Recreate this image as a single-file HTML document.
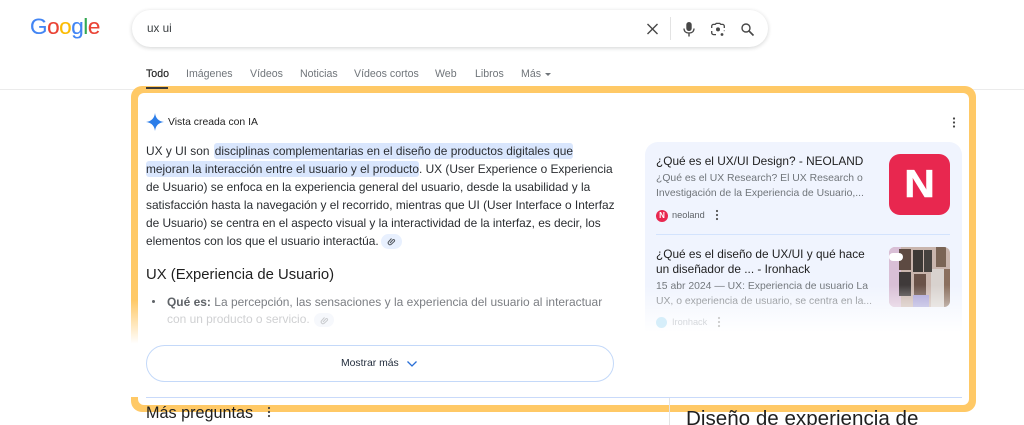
<!DOCTYPE html>
<html lang="es"><head><meta charset="utf-8"><title>ux ui - Buscar con Google</title>
<style>
html,body{margin:0;padding:0;background:#fff}
#p{position:relative;width:1024px;height:425px;overflow:hidden;background:#fff;font-family:"Liberation Sans",sans-serif;color:#1f1f1f;filter:blur(.3px)}
.a{position:absolute;white-space:nowrap}
.l{font-size:11.9px;line-height:18px;color:#2a2d31;left:146px}
.t{font-size:10.6px;color:#70757a;top:68px;line-height:13px}
.h{background:#d9e6fd;border-radius:3px;padding:1px 0}
.d{color:#70757a;font-size:10.4px;line-height:14.5px;left:656px}
.s{color:#1f1f1f;font-size:11.85px;line-height:15px;left:656px}
</style></head><body><div id="p">

<!-- Google logo -->
<div class="a" style="left:30px;top:10px;font-size:22.5px;line-height:34px;letter-spacing:-.45px;-webkit-text-stroke:.12px"><span style="color:#4285f4">G</span><span style="color:#ea4335">o</span><span style="color:#fbbc05">o</span><span style="color:#4285f4">g</span><span style="color:#34a853">l</span><span style="color:#ea4335">e</span></div>

<!-- Search box -->
<div class="a" style="left:132px;top:10px;width:636px;height:37px;border-radius:19px;background:#fff;box-shadow:0 1px 4px rgba(32,33,36,.2)"></div>
<div class="a" style="left:147px;top:22px;font-size:11.7px;line-height:14px;color:#3c4043">ux ui</div>
<svg class="a" style="left:645px;top:21px" width="15" height="16" viewBox="0 0 15 16"><path d="M2.500 3l10 10M12.500 3l-10 10" stroke="#474747" stroke-width="1.400" fill="none"/></svg>
<div class="a" style="left:670px;top:17px;width:1px;height:23px;background:#e3e3e3"></div>
<svg class="a" style="left:681px;top:21px" width="16" height="16" viewBox="0 0 16 16"><rect x="5.300" y="1" width="5.400" height="9" rx="2.700" fill="#474747"/><path d="M3 7.500c0 3 2 4.500 5 4.500s5-1.500 5-4.500" stroke="#474747" stroke-width="1.300" fill="none"/><path d="M8 12v3.500" stroke="#474747" stroke-width="1.400"/></svg>
<svg class="a" style="left:710px;top:22px" width="16" height="15" viewBox="0 0 16 15"><path d="M1.700 6V4.200a1.800 1.800 0 0 1 1.800-1.800h1.700l1-1h3.600l1 1h1.700a1.800 1.800 0 0 1 1.800 1.800V6M1.700 9v1.800a1.800 1.800 0 0 0 1.800 1.800H6M14.300 8.500v.6" stroke="#474747" stroke-width="1.300" fill="none"/><circle cx="8" cy="7.400" r="2" fill="#474747"/><circle cx="12" cy="12.500" r="1.400" fill="#474747"/></svg>
<svg class="a" style="left:740px;top:22px" width="15" height="15" viewBox="0 0 15 15"><circle cx="6" cy="6" r="4" stroke="#474747" stroke-width="1.400" fill="none"/><path d="M9 9l4.500 4.500" stroke="#474747" stroke-width="1.600"/></svg>

<!-- Tabs -->
<div class="a t" style="left:146px;color:#1f1f1f;-webkit-text-stroke:.15px #1f1f1f">Todo</div>
<div class="a t" style="left:186px">Imágenes</div>
<div class="a t" style="left:250px">Vídeos</div>
<div class="a t" style="left:300px">Noticias</div>
<div class="a t" style="left:354px">Vídeos cortos</div>
<div class="a t" style="left:435px">Web</div>
<div class="a t" style="left:475px">Libros</div>
<div class="a t" style="left:521px">Más</div>
<div class="a" style="left:545px;top:73px;width:0;height:0;border-left:3px solid transparent;border-right:3px solid transparent;border-top:3px solid #70757a"></div>
<div class="a" style="left:0;top:89px;width:1024px;height:1px;background:#ebebeb"></div>

<!-- Yellow frame -->
<div class="a" style="left:131px;top:86px;width:845px;height:326px;border-radius:11px;background:#ffc966"></div>
<div class="a" style="left:138px;top:93px;width:831px;height:312px;border-radius:6px;background:#fff"></div>
<div class="a" style="left:131px;top:300px;width:7px;height:97px;background:linear-gradient(rgba(255,255,255,0),#fff 45%)"></div>
<div class="a" style="left:146px;top:87px;width:22px;height:2px;background:#3a3a3a"></div>

<!-- Header -->
<svg class="a" style="left:146px;top:113px" width="18" height="18" viewBox="0 0 18 18"><path d="M9 0C9.600 5.300 12.700 8.400 18 9 12.700 9.600 9.600 12.700 9 18 8.400 12.700 5.300 9.600 0 9 5.300 8.400 8.400 5.300 9 0Z" fill="#2b7de9"/></svg>
<div class="a" style="left:168px;top:116px;font-size:10.4px;line-height:13px;color:#1f1f1f">Vista creada con IA</div>
<svg class="a" style="left:952px;top:117px" width="4" height="11" viewBox="0 0 4 11"><circle cx="2" cy="1.500" r="1.100" fill="#444"/><circle cx="2" cy="5.500" r="1.100" fill="#444"/><circle cx="2" cy="9.500" r="1.100" fill="#444"/></svg>

<!-- Overview text -->
<div class="a l" style="top:142px">UX y UI son <span class="h" style="margin-left:1px;padding-left:1px">disciplinas complementarias en el diseño de productos digitales que</span></div>
<div class="a l" style="top:160px"><span class="h">mejoran la interacción entre el usuario y el producto</span>. UX (User Experience o Experiencia</div>
<div class="a l" style="top:178px">de Usuario) se enfoca en la experiencia general del usuario, desde la usabilidad y la</div>
<div class="a l" style="top:196px">satisfacción hasta la navegación y el recorrido, mientras que UI (User Interface o Interfaz</div>
<div class="a l" style="top:214px;letter-spacing:-.03px">de Usuario) se centra en el aspecto visual y la interactividad de la interfaz, es decir, los</div>
<div class="a l" style="top:232px">elementos con los que el usuario interactúa.</div>
<div class="a" style="left:381px;top:234px;width:21px;height:15px;border-radius:8px;background:#e8f0fe"></div>
<svg class="a" style="left:387px;top:237px" width="9" height="9" viewBox="0 0 9 9"><path d="M3 6l3-3.300a1.100 1.100 0 0 1 1.500 1.500L4 7.500a1.900 1.900 0 0 1-2.600-2.600L4.500 1.500" stroke="#50555c" stroke-width="1" fill="none"/></svg>

<div class="a" style="left:146px;top:266px;font-size:14.85px;line-height:19px;color:#1f1f1f">UX (Experiencia de Usuario)</div>

<div class="a" style="left:152px;top:300px;width:3px;height:3px;border-radius:50%;background:#5f6368"></div>
<div class="a" style="left:167px;top:293px;font-size:11.95px;line-height:18px;color:#7b7e83;word-spacing:.1px"><b style="color:#5f6368">Qué es:</b> La percepción, las sensaciones y la experiencia del usuario al interactuar</div>
<div class="a" style="left:167px;top:310px;font-size:11.95px;line-height:18px;color:#cfd0d2">con un producto o servicio.</div>
<div class="a" style="left:314px;top:313px;width:20px;height:14px;border-radius:7px;background:#f6f8fc"></div>
<svg class="a" style="left:320px;top:316px" width="9" height="9" viewBox="0 0 9 9"><path d="M3 6l3-3.300a1.100 1.100 0 0 1 1.500 1.500L4 7.500a1.900 1.900 0 0 1-2.600-2.600L4.500 1.500" stroke="#c8cacd" stroke-width="1" fill="none"/></svg>

<!-- Show more -->
<div class="a" style="left:146px;top:345px;width:466px;height:35px;border:1px solid #c4d9f9;border-radius:19px;background:#fff"></div>
<div class="a" style="left:341px;top:357px;font-size:10.4px;line-height:13px;color:#1f2a3a">Mostrar más</div>
<svg class="a" style="left:406px;top:360px" width="12" height="8" viewBox="0 0 12 8"><path d="M1.500 1.500l4.500 4.500 4.500-4.500" stroke="#2a6fd6" stroke-width="1.300" fill="none"/></svg>
<div class="a" style="left:146px;top:397px;width:816px;height:1px;background:#c9dafa"></div>

<!-- Sources card -->
<div class="a" style="left:645px;top:142px;width:317px;height:198px;border-radius:13px;background:#f0f4fe"></div>
<div class="a s" style="top:154px">¿Qué es el UX/UI Design? - NEOLAND</div>
<div class="a d" style="top:172px">¿Qué es el UX Research? El UX Research o</div>
<div class="a d" style="top:186.500px">Investigación de la Experiencia de Usuario,...</div>
<div class="a" style="left:656px;top:210px;width:12px;height:12px;border-radius:50%;background:#e8274f;color:#fff;font-size:8px;font-weight:700;line-height:12px;text-align:center">N</div>
<div class="a" style="left:672px;top:209px;font-size:9.200px;line-height:13px;color:#5f6368">neoland</div>
<svg class="a" style="left:715px;top:209px" width="4" height="13" viewBox="0 0 4 13"><circle cx="2" cy="2" r="1.100" fill="#555"/><circle cx="2" cy="6" r="1.100" fill="#555"/><circle cx="2" cy="10" r="1.100" fill="#555"/></svg>
<div class="a" style="left:889px;top:154px;width:61px;height:61px;border-radius:11px;background:#e8274f"></div>
<div class="a" style="left:889px;top:154px;width:61px;height:61px;color:#fff;font-size:38.500px;font-weight:700;line-height:61px;text-align:center;transform:scaleX(1.100);-webkit-text-stroke:.6px #fff">N</div>
<div class="a" style="left:656px;top:234px;width:294px;height:1px;background:#d3e3fd"></div>
<div class="a s" style="top:247px">¿Qué es el diseño de UX/UI y qué hace</div>
<div class="a s" style="top:262px">un diseñador de ... - Ironhack</div>
<div class="a d" style="top:280px">15 abr 2024 — UX: Experiencia de usuario La</div>
<div class="a d" style="top:294.500px">UX, o experiencia de usuario, se centra en la...</div>
<svg class="a" style="left:889px;top:247px;border-radius:6px" width="61" height="60" viewBox="0 0 61 60"><rect width="61" height="60" fill="#c9b5ad"/><rect x="0" y="0" width="12" height="60" fill="#d9bfd6"/><rect x="42" y="22" width="14" height="38" fill="#d8d2ce"/><rect x="10" y="2" width="12" height="21" fill="#5d4a42"/><rect x="24" y="3" width="10" height="22" fill="#3d3936"/><rect x="35" y="3" width="8" height="22" fill="#46423f"/><rect x="47" y="0" width="10" height="20" fill="#7a6455"/><rect x="10" y="25" width="12" height="24" fill="#3f3a3a"/><rect x="25" y="27" width="12" height="21" fill="#6a5248"/><rect x="24" y="48" width="16" height="12" fill="#a6a0d6"/><rect x="55" y="22" width="6" height="38" fill="#8a6f5e"/><rect x="0" y="6" width="14" height="8" rx="4" fill="#fff"/></svg>
<!-- Fade -->
<div class="a" style="left:645px;top:285px;width:317px;height:47px;background:linear-gradient(rgba(255,255,255,0),#fff)"></div>
<div class="a" style="left:645px;top:332px;width:317px;height:9px;background:#fff"></div>
<div class="a" style="left:656px;top:317px;width:11px;height:11px;border-radius:50%;background:#d6eefa"></div>
<div class="a" style="left:672px;top:316px;font-size:9.200px;line-height:13px;color:#d5d8dc">Ironhack</div>
<svg class="a" style="left:717px;top:316px" width="4" height="13" viewBox="0 0 4 13"><circle cx="2" cy="2" r="1.100" fill="#ccc"/><circle cx="2" cy="6" r="1.100" fill="#ccc"/><circle cx="2" cy="10" r="1.100" fill="#ccc"/></svg>

<!-- Below the frame -->
<div class="a" style="left:669px;top:398px;width:1px;height:27px;background:#e3e3e3"></div>
<div class="a" style="left:146px;top:403px;font-size:16.200px;line-height:20px;color:#1f1f1f">Más preguntas</div>
<svg class="a" style="left:267px;top:406px" width="4" height="13" viewBox="0 0 4 13"><circle cx="2" cy="2" r="1.100" fill="#444"/><circle cx="2" cy="6" r="1.100" fill="#444"/><circle cx="2" cy="10" r="1.100" fill="#444"/></svg>
<div class="a" style="left:686px;top:406px;font-size:20.600px;line-height:26px;color:#1f1f1f">Diseño de experiencia de</div>
</div></body></html>
